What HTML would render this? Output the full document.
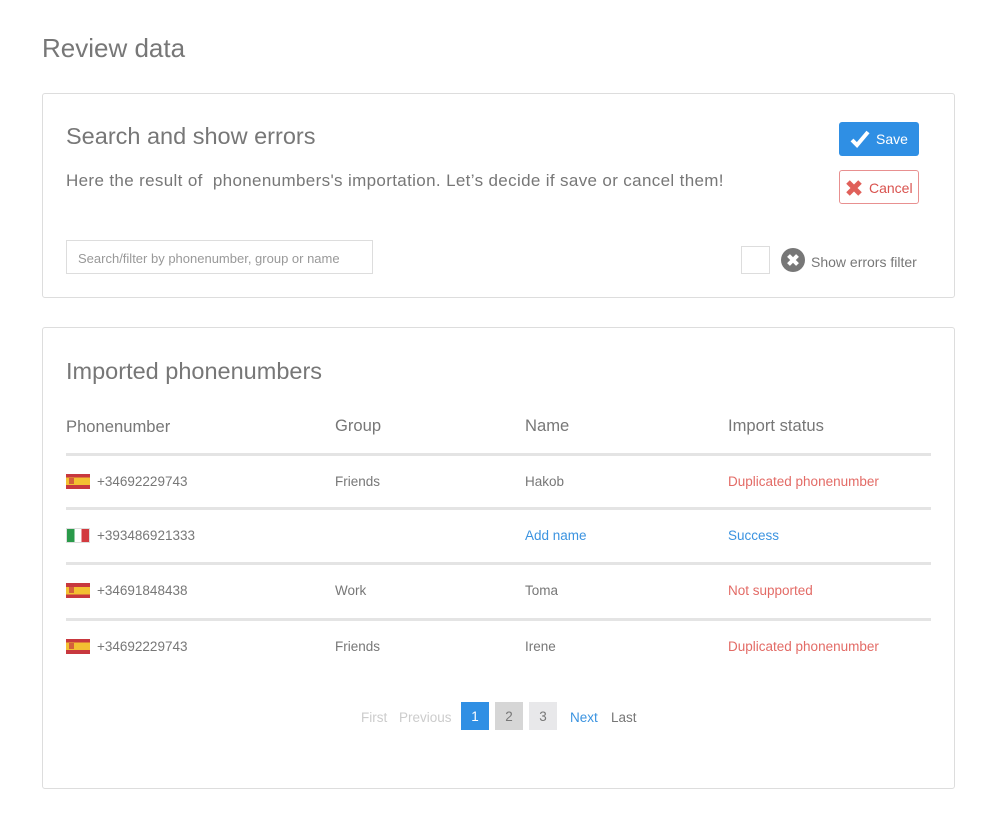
<!DOCTYPE html>
<html><head><style>
*{margin:0;padding:0;box-sizing:border-box}
body{width:981px;height:835px;background:#fff;font-family:"Liberation Sans",sans-serif;color:#777;position:relative;overflow:hidden}
.a{position:absolute;white-space:nowrap}
.box{position:absolute;border:1px solid #ddd;border-radius:3px;background:#fff}
.hr{position:absolute;left:66px;width:865px;height:3px;background:#e4e4e4}
.f{position:absolute;width:24px;height:15px}
.es{background:linear-gradient(#c8383e 0 25%,#f3c032 25% 75%,#c8383e 75%)}
.es:after{content:"";position:absolute;left:3px;top:4px;width:5px;height:6px;background:#c8383e;opacity:.7}
.it{background:linear-gradient(90deg,#2a9a4a 0 33%,#fff 33% 66%,#d23a3f 66%);border:1px solid #ddd}
.t{font-size:13.5px;color:#777}
.h{font-size:16.6px}
</style></head><body>
<div class="a" style="left:42px;top:33px;font-size:26px;color:#777">Review data</div>

<div class="box" style="left:42px;top:93px;width:913px;height:205px"></div>
<div class="a" style="left:66px;top:123px;font-size:23.5px;color:#777">Search and show errors</div>
<div class="a" style="left:66px;top:171px;font-size:17px;letter-spacing:0.35px;color:#777">Here the result of &nbsp;phonenumbers's importation. Let’s decide if save or cancel them!</div>
<div class="a" style="left:839px;top:122px;width:80px;height:34px;background:#2f8fe4;border-radius:3px;color:#fff;font-size:14px">
<svg style="position:absolute;left:11px;top:8px" width="20" height="18" viewBox="0 0 20 18"><path d="M2 10 L7 15 L18 2" stroke="#fff" stroke-width="4" fill="none"/></svg>
<span style="position:absolute;left:37px;top:9px">Save</span></div>
<div class="a" style="left:839px;top:170px;width:80px;height:34px;border:1px solid #e89090;border-radius:3px;color:#d9534f;font-size:14px">
<svg style="position:absolute;left:5px;top:8px" width="18" height="18" viewBox="0 0 18 18"><path d="M3 3 L15 15 M15 3 L3 15" stroke="#e0605a" stroke-width="5"/></svg>
<span style="position:absolute;left:29px;top:9px">Cancel</span></div>
<div class="a" style="left:66px;top:240px;width:307px;height:34px;border:1px solid #ddd;font-size:13px;color:#999;padding:10px 11px">Search/filter by phonenumber, group or name</div>
<div class="a" style="left:741px;top:246px;width:29px;height:28px;border:1px solid #ddd"></div>
<svg class="a" style="left:781px;top:248px" width="24" height="24" viewBox="0 0 24 24"><circle cx="12" cy="12" r="12" fill="#777"/><path d="M7.5 7.5 L16.5 16.5 M16.5 7.5 L7.5 16.5" stroke="#fff" stroke-width="4"/></svg>
<div class="a" style="left:811px;top:254px;font-size:14px;color:#777">Show errors filter</div>

<div class="box" style="left:42px;top:327px;width:913px;height:462px"></div>
<div class="a" style="left:66px;top:358px;font-size:23.5px;color:#777">Imported phonenumbers</div>
<div class="a h" style="left:66px;top:417px">Phonenumber</div>
<div class="a h" style="left:335px;top:416px">Group</div>
<div class="a h" style="left:525px;top:416px">Name</div>
<div class="a h" style="left:728px;top:416px">Import status</div>
<div class="hr" style="top:453px"></div>
<div class="hr" style="top:507px"></div>
<div class="hr" style="top:562px"></div>
<div class="hr" style="top:618px"></div>

<div class="f es" style="left:66px;top:474px"></div><div class="a t" style="left:97px;top:474px">+34692229743</div>
<div class="a t" style="left:335px;top:474px">Friends</div><div class="a t" style="left:525px;top:474px">Hakob</div><div class="a t" style="left:728px;top:474px;color:#e36b66">Duplicated phonenumber</div>

<div class="f it" style="left:66px;top:528px"></div><div class="a t" style="left:97px;top:528px">+393486921333</div>
<div class="a t" style="left:525px;top:528px;color:#3b93e0">Add name</div><div class="a t" style="left:728px;top:528px;color:#3b93e0">Success</div>

<div class="f es" style="left:66px;top:583px"></div><div class="a t" style="left:97px;top:583px">+34691848438</div>
<div class="a t" style="left:335px;top:583px">Work</div><div class="a t" style="left:525px;top:583px">Toma</div><div class="a t" style="left:728px;top:583px;color:#e36b66">Not supported</div>

<div class="f es" style="left:66px;top:639px"></div><div class="a t" style="left:97px;top:639px">+34692229743</div>
<div class="a t" style="left:335px;top:639px">Friends</div><div class="a t" style="left:525px;top:639px">Irene</div><div class="a t" style="left:728px;top:639px;color:#e36b66">Duplicated phonenumber</div>

<div class="a t" style="left:361px;top:710px;color:#ccc">First</div>
<div class="a t" style="left:399px;top:710px;color:#ccc">Previous</div>
<div class="a t" style="left:461px;top:702px;width:28px;height:28px;background:#2f8fe4;color:#fff;text-align:center;line-height:30px">1</div>
<div class="a t" style="left:495px;top:702px;width:28px;height:28px;background:#d6d6d6;text-align:center;line-height:30px">2</div>
<div class="a t" style="left:529px;top:702px;width:28px;height:28px;background:#e8e8ea;text-align:center;line-height:30px">3</div>
<div class="a t" style="left:570px;top:710px;color:#3b93e0">Next</div>
<div class="a t" style="left:611px;top:710px">Last</div>
</body></html>
